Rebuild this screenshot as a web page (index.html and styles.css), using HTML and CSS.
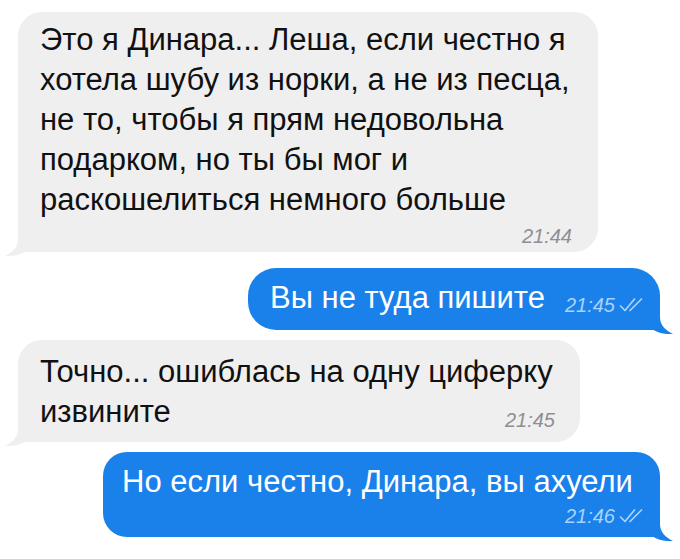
FILE: index.html
```html
<!DOCTYPE html>
<html lang="ru">
<head>
<meta charset="utf-8">
<title>Чат</title>
<link rel="stylesheet" href="styles.css">
</head>
<body>
<div class="chat">
  <div class="bubble in b1">
    <div class="line">Это я Динара... Леша, если честно я</div>
    <div class="line">хотела шубу из норки, а не из песца,</div>
    <div class="line">не то, чтобы я прям недовольна</div>
    <div class="line">подарком, но ты бы мог и</div>
    <div class="line">раскошелиться немного больше</div>
    <div class="meta-row"><span class="meta">21:44</span></div>
    <svg class="tail tail-left" viewBox="0 0 30 30" width="30" height="30"><path d="M13 0 V13 C13 21 8 26 0 30 C7 30.6 14 29.2 19.5 26 H30 V0 Z"/></svg>
  </div>

  <div class="bubble out b2">
    <div class="row">
      <span class="line">Вы не туда пишите</span>
      <span class="meta">21:45<svg class="checks" viewBox="0 0 26 16" width="26" height="16"><path d="M1.5 9 L6 13.5 L15.5 2 M11 13.5 L22.5 2"/></svg></span>
    </div>
    <svg class="tail tail-right" viewBox="0 0 30 30" width="30" height="30"><path d="M17 0 V13 C17 21 22 26 30 30 C23 30.6 16 29.2 10.5 26 H0 V0 Z"/></svg>
  </div>

  <div class="bubble in b3">
    <div class="line">Точно... ошиблась на одну циферку</div>
    <div class="row spread">
      <span class="line">извините</span>
      <span class="meta">21:45</span>
    </div>
    <svg class="tail tail-left" viewBox="0 0 30 30" width="30" height="30"><path d="M13 0 V13 C13 21 8 26 0 30 C7 30.6 14 29.2 19.5 26 H30 V0 Z"/></svg>
  </div>

  <div class="bubble out b4">
    <div class="line">Но если честно, Динара, вы ахуели</div>
    <div class="meta-row"><span class="meta">21:46<svg class="checks" viewBox="0 0 26 16" width="26" height="16"><path d="M1.5 9 L6 13.5 L15.5 2 M11 13.5 L22.5 2"/></svg></span></div>
    <svg class="tail tail-right" viewBox="0 0 30 30" width="30" height="30"><path d="M17 0 V13 C17 21 22 26 30 30 C23 30.6 16 29.2 10.5 26 H0 V0 Z"/></svg>
  </div>
</div>
</body>
</html>
```

FILE: styles.css
```css
html, body {
  margin: 0;
  padding: 0;
  background: #ffffff;
}

body {
  width: 680px;
  height: 559px;
  overflow: hidden;
  font-family: "Liberation Sans", Arial, sans-serif;
}

.chat {
  display: flex;
  flex-direction: column;
  padding-top: 12px;
}

.bubble {
  position: relative;
  box-sizing: border-box;
  border-radius: 24px;
  font-size: 31px;
  line-height: 40px;
  white-space: nowrap;
}

.bubble.in {
  align-self: flex-start;
  margin-left: 18px;
  background: #efeff0;
  color: #111111;
  border-bottom-left-radius: 0;
}

.bubble.out {
  align-self: flex-end;
  margin-right: 20px;
  background: #1a80ea;
  color: #ffffff;
  border-bottom-right-radius: 0;
}

.line {
  display: block;
}

.row {
  display: flex;
  align-items: flex-end;
}

.row.spread {
  justify-content: space-between;
}

.meta-row {
  display: flex;
  justify-content: flex-end;
}

.meta {
  display: inline-flex;
  align-items: center;
  font-size: 20px;
  line-height: 22px;
  font-style: italic;
}

.in .meta {
  color: #8e8e93;
}

.out .meta {
  color: #a9d3ff;
}

.checks {
  margin-left: 4px;
  fill: none;
  stroke: #a9d3ff;
  stroke-width: 1.7;
  stroke-linecap: round;
  stroke-linejoin: round;
}

.tail {
  position: absolute;
  bottom: -4px;
}

.tail-left {
  left: -13px;
  fill: #efeff0;
}

.tail-right {
  right: -13px;
  fill: #1a80ea;
}

/* bubble 1 */
.b1 {
  width: 580px;
  padding: 8px 26px 5px 22px;
}
.b1 .meta-row {
  margin-top: 5px;
}

/* bubble 2 */
.b2 {
  margin-top: 16px;
  width: 412px;
  border-radius: 28px;
  border-bottom-right-radius: 0;
  padding: 10px 15px 12px 22px;
}
.b2 .meta {
  margin-left: 20px;
  margin-bottom: 2px;
}

/* bubble 3 */
.b3 {
  margin-top: 10px;
  width: 562px;
  padding: 12px 25px 10px 22px;
}
.b3 .meta {
  margin-bottom: 1px;
}

/* bubble 4 */
.b4 {
  margin-top: 10px;
  width: 557px;
  padding: 10px 15px 10px 19px;
}
.b4 .meta-row {
  margin-top: 3px;
}
```
